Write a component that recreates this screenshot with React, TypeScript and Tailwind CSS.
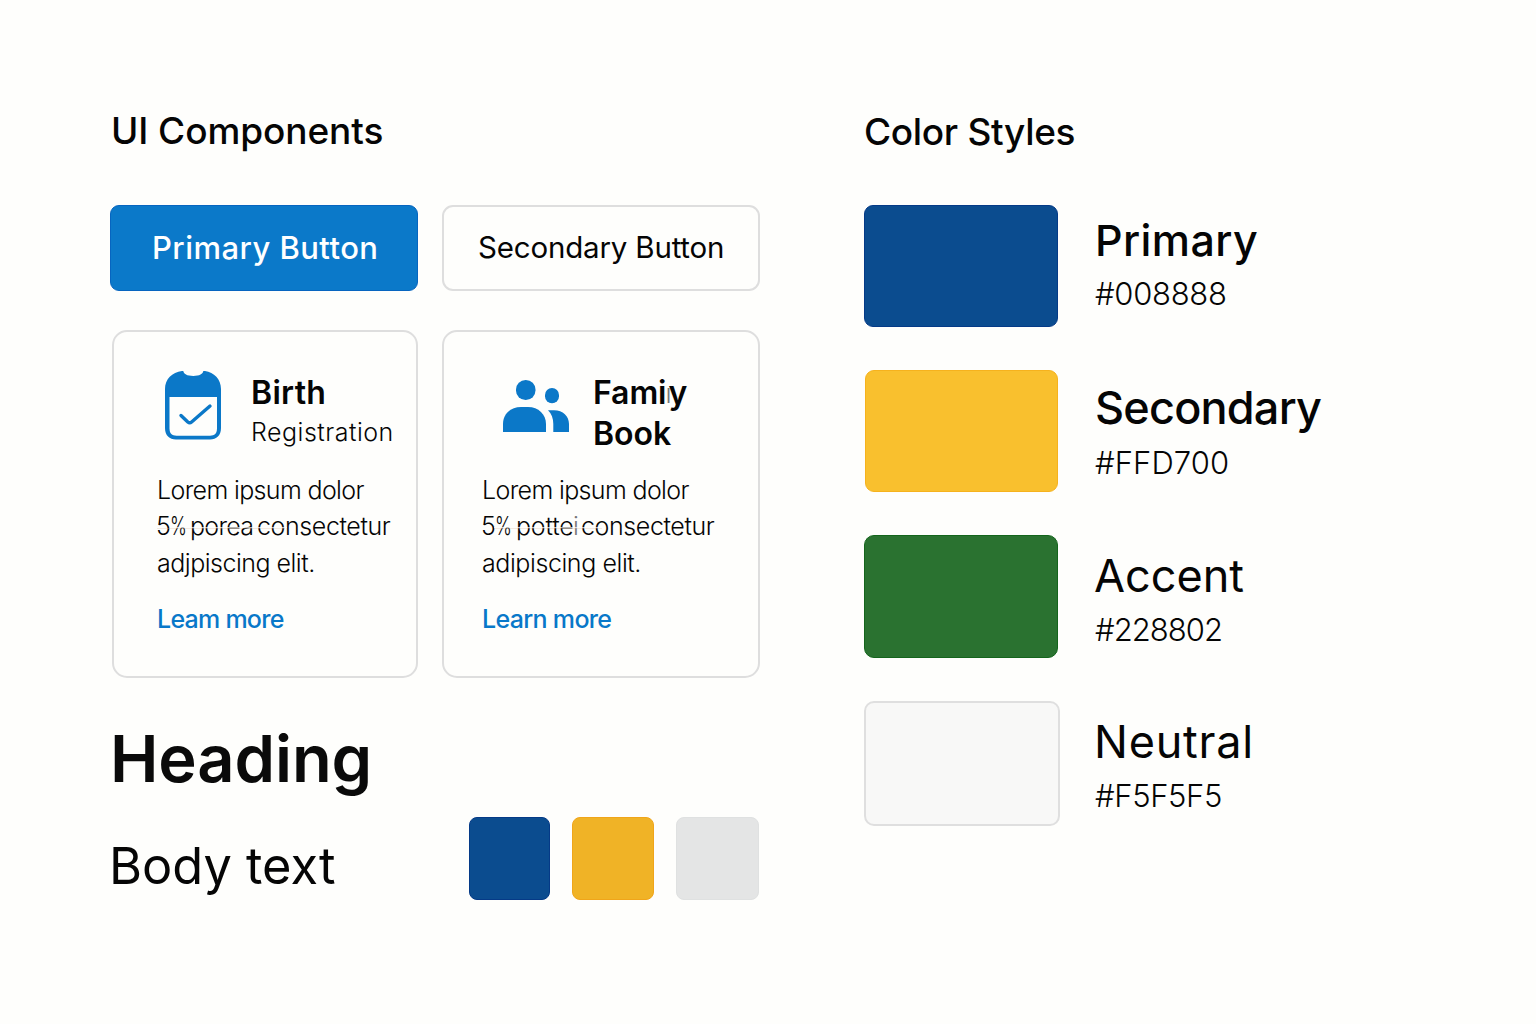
import React from "react";

function CalendarIcon() {
  return (
    <svg width="56" height="69" viewBox="0 0 56 69" fill="none" className="shrink-0">
      <path
        d="M0 18C0 8 7 1.5 17 0H18.3C18.6 3 22 4.9 28.3 4.9C34.5 4.9 38 3 38.3 0H40C49 1.5 56 8 56 18V57C56 64.5 51.5 68.5 45 68.5H11C4.5 68.5 0 64.5 0 57Z"
        fill="#0b78c8"
      />
      <path d="M4.500 26H52V57.500C52 62.300 49.500 64.700 45 64.700H11.500C7 64.700 4.500 62.300 4.500 57.500Z" fill="#fefefc" />
      <path d="M16 44.500L22.800 51Q24.700 52.600 26.600 51L45 35" stroke="#0b78c8" strokeWidth="3.400" strokeLinecap="round" strokeLinejoin="round" />
    </svg>
  );
}

function PeopleIcon() {
  return (
    <svg width="66" height="53" viewBox="0 0 66 53" fill="#0b78c8" className="shrink-0">
      <rect x="13" y="0" width="19.5" height="20" rx="9.6" />
      <rect x="42" y="8" width="14" height="15.3" rx="7" />
      <path d="M0 52V44C0 33.5 8 27 18 27H25C35.5 27 43 34.5 43 44V52Z" />
      <path d="M45 30.2H51C60 30.2 66 36 66 44V52H50.3V44C50.3 38.5 48.500 33.500 45 30.200Z" />
    </svg>
  );
}

type Swatch = {
  name: string;
  hex: string;
  box: string;
  labels: string;
  nameStyle: string;
  hexStyle: string;
};

const swatches: Swatch[] = [
  {
    name: "Primary",
    hex: "#008888",
    box: "w-[194px] h-[122px] rounded-[9px] bg-[#0b4c8f] border border-[#053a87]",
    labels: "pt-[5px]",
    nameStyle: "h-[61px] text-[43px] font-medium tracking-[0.42px]",
    hexStyle: "tracking-[-0.3px]",
  },
  {
    name: "Secondary",
    hex: "#FFD700",
    box: "w-[193px] ml-[1px] h-[122px] rounded-[9px] bg-[#f9c02e] border border-[#f6b21d]",
    labels: "pt-[8px]",
    nameStyle: "h-[62px] text-[45px] font-medium tracking-[-0.78px]",
    hexStyle: "tracking-[0.1px]",
  },
  {
    name: "Accent",
    hex: "#228802",
    box: "w-[194px] h-[123px] rounded-[10px] bg-[#2a7230] border border-[#14651c]",
    labels: "pt-[11px]",
    nameStyle: "-ml-[1px] h-[61px] text-[45px] font-normal",
    hexStyle: "tracking-[-0.96px]",
  },
  {
    name: "Neutral",
    hex: "#F5F5F5",
    box: "w-[196px] -mr-[2px] h-[125px] rounded-[10px] bg-[#f8f8f7] border-[2.5px] border-[#dfdfdf]",
    labels: "pt-[11px]",
    nameStyle: "-ml-[1px] h-[61px] text-[45px] font-normal tracking-[0.75px]",
    hexStyle: "tracking-[-0.36px]",
  },
];

export default function App() {
  return (
    <div className="flex h-[1024px] w-[1536px] overflow-hidden bg-[#fefefc] font-['Inter',sans-serif] whitespace-nowrap text-[#050505]">
      <section className="ml-[110px] w-[650px] shrink-0 pt-[106px]">
        <h2 className="ml-[1px] h-[48px] text-[37px] leading-[49px] font-medium tracking-[-0.08px]">UI Components</h2>

        <div className="mt-[51px] flex justify-between">
          <button className="flex h-[86px] w-[308px] items-center rounded-[9px] border border-[#0765c0] bg-[#0b79c9] pl-[41px] text-[31px] font-medium tracking-[0.45px] text-white">
            Primary Button
          </button>
          <button className="flex h-[86px] w-[318px] items-center rounded-[11px] border-[2.5px] border-[#dedede] pb-[2px] pl-[34px] text-[29.5px] font-normal tracking-[-0.19px]">
            Secondary Button
          </button>
        </div>

        <div className="mt-[39px] flex justify-between">
          <article className="ml-[2px] h-[348px] w-[306px] rounded-[15px] border-[2.5px] border-[#dedede] pl-[43px]">
            <div className="flex h-[140px] pt-[39px]">
              <div className="ml-[8px] w-[86px]">
                <CalendarIcon />
              </div>
              <div className="text-[32px]">
                <h3 className="h-[44px] leading-[44px] font-semibold tracking-[0.3px]">Birth</h3>
                <p className="-mt-[1px] h-[36px] text-[25px] leading-[36px] font-light tracking-[0.5px]">Registration</p>
              </div>
            </div>
            <div className="relative h-[110px] text-[25px] leading-[36.3px] font-light">
              <p className="tracking-[-0.64px]">Lorem ipsum dolor</p>
              <p className="flex tracking-[-0.4px]">
                <span className="-ml-[1px] w-[14px]">5</span>
                <span className="w-[20px] origin-left scale-x-[0.72]">%</span>
                <span className="w-[67px] tracking-[-0.7px]">porea</span>
                <span>consectetur</span>
              </p>
              <p className="tracking-[-0.5px]">adjpiscing elit.</p>
              <div className="absolute top-[55px] left-[14px] h-px w-[116px] bg-[#fefefc]/70" />
              <div className="absolute top-[56px] left-0 h-px w-[128px] bg-[#d9b8a0]/30" />
            </div>
            <a className="mt-[19px] block h-[36px] text-[25px] leading-[36px] font-medium tracking-[-0.75px] text-[#0878c9]">Leam more</a>
          </article>

          <article className="h-[348px] w-[318px] rounded-[15px] border-[2.5px] border-[#dedede] pl-[38px]">
            <div className="flex h-[140px] pt-[39px]">
              <div className="ml-[21px] w-[90px] pt-[9px]">
                <PeopleIcon />
              </div>
              <h3 className="text-[32px] font-semibold">
                <span className="flex h-[44px] items-center tracking-[-0.1px]">
                  Fami<span className="-ml-[1px] w-[3px] text-[26px] font-light text-[#777]">ı</span>y
                </span>
                <span className="block h-[38px] leading-[38px]">Book</span>
              </h3>
            </div>
            <div className="relative h-[110px] text-[25px] leading-[36.3px] font-light">
              <p className="tracking-[-0.64px]">Lorem ipsum dolor</p>
              <p className="flex tracking-[-0.4px]">
                <span className="-ml-[1px] w-[14px]">5</span>
                <span className="w-[21px] origin-left scale-x-[0.72]">%</span>
                <span className="w-[57px] tracking-[-0.2px]">potte</span>
                <span className="w-[8px] text-[#777]">i</span>
                <span>consectetur</span>
              </p>
              <p className="tracking-[-0.42px]">adipiscing elit.</p>
              <div className="absolute top-[55px] left-[12px] h-px w-[108px] bg-[#fefefc]/70" />
              <div className="absolute top-[56px] left-[12px] h-px w-[108px] bg-[#d9b8a0]/30" />
            </div>
            <a className="mt-[19px] block h-[36px] text-[25px] leading-[36px] font-medium tracking-[-0.68px] text-[#0878c9]">Learn more</a>
          </article>
        </div>

        <div className="mt-[40px] flex justify-between">
          <div>
            <h1 className="h-[82px] text-[65px] leading-[82px] font-semibold tracking-[-0.1px] text-[#0a0a0a]">Heading</h1>
            <p className="-ml-[1px] mt-[36px] h-[60px] text-[50.5px] leading-[60px]">Body text</p>
          </div>
          <div className="mt-[99px] mr-px flex">
            <div className="h-[83px] w-[81px] rounded-[8px] border border-[#053a87] bg-[#0b4c8f]" />
            <div className="ml-[22px] h-[83px] w-[82px] rounded-[8px] border border-[#f0a51a] bg-[#f0b326]" />
            <div className="ml-[22px] h-[83px] w-[83px] rounded-[8px] border border-[#dfe1e1] bg-[#e4e5e5]" />
          </div>
        </div>
      </section>

      <section className="ml-[104px] pt-[107px]">
        <h2 className="h-[48px] text-[37px] leading-[49px] font-medium tracking-[-0.32px]">Color Styles</h2>
        <div className="mt-[50px]">
          {swatches.map((s) => (
            <div key={s.name} className="flex h-[165.2px]">
              <div className={"shrink-0 " + s.box} />
              <div className={"ml-[37px] " + s.labels}>
                <div className={"leading-[60px] " + s.nameStyle}>{s.name}</div>
                <div className={"h-[46px] text-[31px] leading-[46px] font-light " + s.hexStyle}>{s.hex}</div>
              </div>
            </div>
          ))}
        </div>
      </section>
    </div>
  );
}
